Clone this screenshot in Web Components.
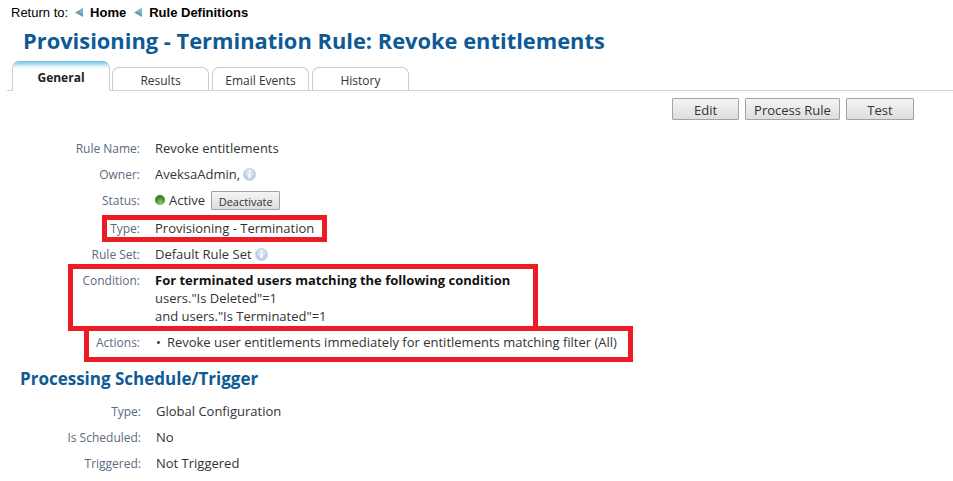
<!DOCTYPE html>
<html>
<head>
<meta charset="utf-8">
<title>Provisioning - Termination Rule</title>
<style>
    body {
        margin: 0;
        background: white;
        font-family: "Open Sans", sans-serif;
        font-size: 13px;
        color: #333;
    }
</style>
</head>
<body>
<rule-page></rule-page>
<script>
const ICON_INFO = `<svg width="13" height="13" viewBox="0 0 13 13">
    <circle cx="6.5" cy="6.5" r="6.2" fill="#bcd0e8" stroke="#c6d5e8" stroke-width="0.6"/>
    <circle cx="6.5" cy="5" r="4" fill="#d4e1f0"/>
    <rect x="5.5" y="5.4" width="2" height="4.8" fill="#fff"/>
    <rect x="5.5" y="2.6" width="2" height="1.8" fill="#fff"/>
</svg>`

class returnBar extends HTMLElement {
    constructor() {
        super()
        this.attachShadow({mode: "open"})
    }

    connectedCallback() {
        const arrow = `<svg width="8" height="9" viewBox="0 0 8 9">
            <path d="M8 0V9L0 4.5Z" fill="#7d96a0"/>
            <path d="M8 0V6L3 2.9Z" fill="#5ec3ea"/>
        </svg>`
        this.shadowRoot.innerHTML = `
            <style>
                :host {
                    display: flex;
                    align-items: center;
                    height: 24px;
                    padding-left: 11px;
                    font: 13px "Liberation Sans", Arial, sans-serif;
                    color: #000;
                }
                a { font-weight: bold; color: #000; text-decoration: none; margin-left: 7px; }
                svg { margin-left: 8px; }
                span { margin-right: -1px; }
            </style>
            <span>Return to:</span>
            ${arrow}<a href="#">Home</a>
            ${arrow}<a href="#">Rule Definitions</a>
        `
    }
}

class ruleTab extends HTMLElement {
    constructor() {
        super()
        this.attachShadow({mode: "open"})
    }

    connectedCallback() {
        this.shadowRoot.innerHTML = `
            <style>
                :host {
                    display: block;
                    box-sizing: border-box;
                    width: 97px;
                    height: 23px;
                    margin-left: 3px;
                    border: 1px solid #ccc;
                    border-bottom: none;
                    border-radius: 7px 7px 0 0;
                    background: white;
                    text-align: center;
                    font-size: 12px;
                    line-height: 26px;
                    color: #333;
                }
                :host([active]) {
                    width: 98px;
                    height: 30px;
                    margin-left: 0;
                    margin-right: -1px;
                    margin-bottom: -1px;
                    position: relative;
                    border-top: 1px solid #7cc8e8;
                    background: linear-gradient(#7cc8e8, #d8f0fa 4px, white 7px);
                    font-weight: bold;
                    line-height: 32px;
                    color: #222;
                }
            </style>
            <slot></slot>
        `
    }
}

class ruleTabs extends HTMLElement {
    constructor() {
        super()
        this.attachShadow({mode: "open"})
    }

    connectedCallback() {
        this.shadowRoot.innerHTML = `
            <style>
                :host {
                    display: flex;
                    align-items: flex-end;
                    margin-left: 7px;
                    padding-left: 5px;
                    border-bottom: 1px solid #d2d2d2;
                }
            </style>
            <slot></slot>
        `
    }
}

class ruleButton extends HTMLElement {
    constructor() {
        super()
        this.attachShadow({mode: "open"})
    }

    connectedCallback() {
        this.shadowRoot.innerHTML = `
            <style>
                :host {
                    display: inline-block;
                    box-sizing: border-box;
                    height: 22px;
                    line-height: 22px;
                    text-align: center;
                    border: 1px solid #a3a3a3;
                    border-radius: 1px;
                    background: linear-gradient(#f4f4f4, #dedede);
                    font-size: 13px;
                    color: #333;
                }
                :host([small]) {
                    width: 69px;
                    height: 19px;
                    line-height: 19px;
                    font-size: 11px;
                }
            </style>
            <slot></slot>
        `
    }
}

class ruleRow extends HTMLElement {
    constructor() {
        super()
        this.attachShadow({mode: "open"})
    }

    connectedCallback() {
        this.shadowRoot.innerHTML = `
            <style>
                :host {
                    display: grid;
                    grid-template-columns: var(--label-width, 140px) 1fr;
                    column-gap: 15px;
                    align-items: baseline;
                    position: relative;
                    min-height: 26px;
                    line-height: 18px;
                    box-sizing: border-box;
                    padding-top: 4px;
                }
                .label { text-align: right; color: #5b6b80; font-size: 12px; }
                .value { color: #333; }
                ::slotted([slot=mark]) {
                    position: absolute;
                    border: 5px solid #ed1c24;
                    box-sizing: border-box;
                }
            </style>
            <div class="label"><slot name="label"></slot></div>
            <div class="value"><slot></slot></div>
            <slot name="mark"></slot>
        `
    }
}

class rulePage extends HTMLElement {
    constructor() {
        super()
        this.attachShadow({mode: "open"})
    }

    connectedCallback() {
        this.shadowRoot.innerHTML = `
            <style>
                :host { display: block; width: 953px; height: 481px; overflow: hidden; }
                h1 {
                    margin: 0;
                    padding: 2px 0 0 23px;
                    height: 35px;
                    font-size: 21.87px;
                    line-height: 30px;
                    font-weight: bold;
                    color: #0f5a94;
                }
                h2 {
                    margin: 0;
                    padding: 13px 0 0 20px;
                    height: 30px;
                    font-size: 17px;
                    line-height: 22px;
                    font-weight: bold;
                    color: #0f5a94;
                }
                .actions {
                    display: flex;
                    justify-content: flex-end;
                    gap: 6px;
                    padding: 7px 39px 0 0;
                    height: 44px;
                    box-sizing: border-box;
                }
                .edit { width: 67px; }
                .process { width: 95px; }
                .test { width: 68px; }
                .second { --label-width: 141px; }
                .status { display: flex; align-items: center; gap: 4px; }
                .dot {
                    display: inline-block;
                    width: 10px;
                    height: 10px;
                    border-radius: 50%;
                    background: radial-gradient(circle at 55% 75%, #9ccc5e, #3f8f30 50%, #24702a);
                }
                rule-button[small] { margin: 2px 0 0 2px; }
                .info svg { vertical-align: -2px; }
                .bullet { margin: 0 6px 0 1px; }
            </style>
            <return-bar></return-bar>
            <h1>Provisioning - Termination Rule: Revoke entitlements</h1>
            <rule-tabs>
                <rule-tab active>General</rule-tab>
                <rule-tab>Results</rule-tab>
                <rule-tab>Email Events</rule-tab>
                <rule-tab>History</rule-tab>
            </rule-tabs>
            <div class="actions">
                <rule-button class="edit">Edit</rule-button>
                <rule-button class="process">Process Rule</rule-button>
                <rule-button class="test">Test</rule-button>
            </div>
            <rule-row><span slot="label">Rule Name:</span>Revoke entitlements</rule-row>
            <rule-row><span slot="label">Owner:</span><span>AveksaAdmin, <span class="info">${ICON_INFO}</span></span></rule-row>
            <rule-row style="min-height: 28px; padding-top: 2px"><span slot="label">Status:</span>
                <span class="status"><span class="dot"></span>Active<rule-button small>Deactivate</rule-button></span>
            </rule-row>
            <rule-row>
                <span slot="label">Type:</span>Provisioning - Termination
                <span slot="mark" style="left:102px;top:0;width:225px;height:27px"></span>
            </rule-row>
            <rule-row><span slot="label">Rule Set:</span><span>Default Rule Set <span class="info">${ICON_INFO}</span></span></rule-row>
            <rule-row>
                <span slot="label">Condition:</span>
                <div><b style="color:#111">For terminated users matching the following condition</b><br>users."Is Deleted"=1<br>and users."Is Terminated"=1</div>
                <span slot="mark" style="left:68px;top:-3px;width:470px;height:67px"></span>
            </rule-row>
            <rule-row style="margin-top:4px">
                <span slot="label">Actions:</span>
                <div><span class="bullet">•</span>Revoke user entitlements immediately for entitlements matching filter (All)</div>
                <span slot="mark" style="left:84px;top:-3px;width:549px;height:36px"></span>
            </rule-row>
            <h2>Processing Schedule/Trigger</h2>
            <div class="second">
                <rule-row><span slot="label">Type:</span>Global Configuration</rule-row>
                <rule-row><span slot="label">Is Scheduled:</span>No</rule-row>
                <rule-row><span slot="label">Triggered:</span>Not Triggered</rule-row>
            </div>
        `
    }
}

window.customElements.define('return-bar', returnBar)
window.customElements.define('rule-tab', ruleTab)
window.customElements.define('rule-tabs', ruleTabs)
window.customElements.define('rule-button', ruleButton)
window.customElements.define('rule-row', ruleRow)
window.customElements.define('rule-page', rulePage)
</script>
</body>
</html>
